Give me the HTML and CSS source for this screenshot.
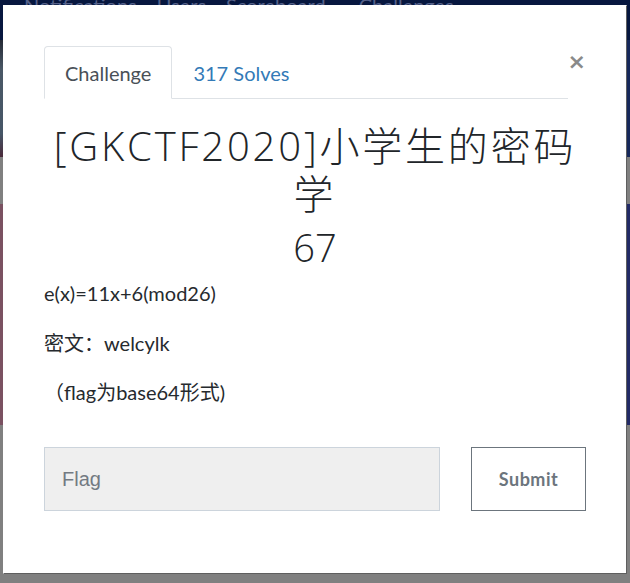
FILE: index.html
```html
<!DOCTYPE html>
<html lang="zh">
<head>
<meta charset="utf-8">
<title>Challenge</title>
<link rel="stylesheet" href="styles.css">
</head>
<body>
<div class="page">
  <header class="navbar">
    <nav class="nav-links">
      <span class="nav-link">Notifications</span>
      <span class="nav-link">Users</span>
      <span class="nav-link">Scoreboard <span class="caret">▾</span></span>
      <span class="nav-link">Challenges <span class="caret">▾</span></span>
    </nav>
  </header>
  <div class="hero">
    <div class="hero-left"></div>
    <div class="hero-right"></div>
  </div>
  <div class="band"></div>
  <div class="section">
    <div class="section-left"></div>
    <div class="section-right"></div>
  </div>
  <div class="rest"></div>

  <div class="modal">
    <div class="modal-head">
      <ul class="tabs">
        <li class="tab active">Challenge</li>
        <li class="tab">317 Solves</li>
      </ul>
      <div class="close-wrap"><span class="close">×</span></div>
    </div>
    <h1 class="title">[GKCTF2020]小学生的密码学</h1>
    <h3 class="points">67</h3>
    <div class="desc">
      <p>e(x)=11x+6(mod26)</p>
      <p>密文：welcylk</p>
      <p>（flag为base64形式)</p>
    </div>
    <form class="flag-form">
      <input class="flag-input" type="text" placeholder="Flag">
      <button class="submit" type="button">Submit</button>
    </form>
  </div>
</div>
</body>
</html>
```

FILE: styles.css
```css
html, body {
  margin: 0;
  padding: 0;
}
body {
  width: 630px;
  height: 583px;
  overflow: hidden;
  background: #808080;
  font-family: Lato, "Noto Sans CJK SC", sans-serif;
}
.page {
  position: relative;
  width: 630px;
  height: 583px;
  display: flex;
  flex-direction: column;
}
.navbar {
  height: 40px;
  background: #07173f;
  overflow: hidden;
}
.nav-links {
  display: flex;
  gap: 20px;
  padding-left: 24px;
  margin-top: -10px;
  font-size: 20px;
  line-height: 30px;
  color: #56628a;
}
.caret {
  font-size: 15px;
}
.hero {
  height: 117px;
  display: flex;
}
.hero-left {
  width: 315px;
  background: linear-gradient(180deg, #252a35 0%, #4a5866 25%, #465667 80%, #4a2a3a 100%);
}
.hero-right {
  flex: 1;
  background: #16285a;
}
.band {
  height: 47px;
  background: #808080;
}
.section {
  height: 221px;
  display: flex;
}
.section-left {
  width: 315px;
  background: #7a5161;
}
.section-right {
  flex: 1;
  background: #222a66;
}
.rest {
  flex: 1;
  background: #808080;
}

.modal {
  position: absolute;
  left: 3px;
  top: 5px;
  width: 624px;
  height: 569px;
  box-sizing: border-box;
  background: #fff;
  border: 1px solid #5f5f5f;
  border-top-color: #fff;
  border-left-color: #fff;
  padding: 40px 40px 0 40px;
  color: #212529;
}
.modal-head {
  display: flex;
}
.tabs {
  list-style: none;
  margin: 0;
  padding: 0;
  width: 524px;
  display: flex;
  border-bottom: 1px solid #dee2e6;
}
.tab {
  font-size: 20px;
  line-height: 28px;
  padding: 12px 20px 11px;
  border: 1px solid transparent;
  border-radius: 4px 4px 0 0;
  margin-bottom: -1px;
  color: #337ab7;
}
.tab.active {
  color: #495057;
  border-color: #dee2e6 #dee2e6 #fff;
  background: #fff;
}
.close-wrap {
  flex: 1;
  display: flex;
  justify-content: center;
}
.close {
  font-family: "DejaVu Sans", sans-serif;
  font-size: 22px;
  font-weight: 700;
  line-height: 1;
  margin-top: 5px;
  color: #8a8a8a;
}
.title {
  margin: 23px 0 0;
  text-align: center;
  font-family: "Open Sans", "Noto Sans CJK SC", sans-serif;
  font-weight: 300;
  font-size: 40px;
  line-height: 48px;
  letter-spacing: 2.8px;
}
.points {
  margin: 5px 0 0;
  text-align: center;
  font-family: "Open Sans", sans-serif;
  font-weight: 300;
  font-size: 38px;
  line-height: 48px;
}
.desc {
  margin-top: 7px;
}
.desc p {
  margin: 0 0 19.5px;
  font-size: 20px;
  line-height: 30px;
  color: #262a2e;
}
.desc p:last-child {
  margin-bottom: 0;
}
.flag-form {
  margin-top: 40px;
  display: flex;
  gap: 31px;
}
.flag-input {
  flex: 1;
  height: 64px;
  box-sizing: border-box;
  border: 1px solid #ccd4dc;
  background: #efefef;
  padding: 0 17px;
  font-family: "Liberation Sans", Arial, sans-serif;
  font-size: 20px;
  color: #495057;
  outline: none;
}
.flag-input::placeholder {
  color: #737a82;
}
.submit {
  width: 115px;
  height: 64px;
  box-sizing: border-box;
  background: #fff;
  border: 1px solid #6c757d;
  font-family: Lato, sans-serif;
  font-weight: 700;
  font-size: 18px;
  letter-spacing: 0.5px;
  color: #6c757d;
}
```
